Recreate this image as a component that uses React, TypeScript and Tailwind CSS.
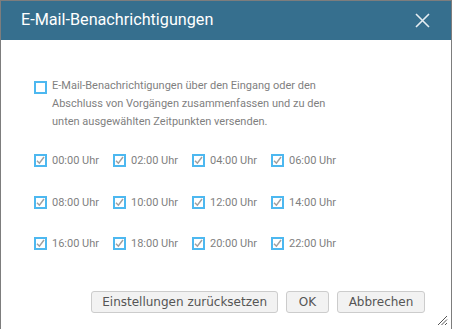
import React from 'react';

const times = [
  '00:00 Uhr', '02:00 Uhr', '04:00 Uhr', '06:00 Uhr',
  '08:00 Uhr', '10:00 Uhr', '12:00 Uhr', '14:00 Uhr',
  '16:00 Uhr', '18:00 Uhr', '20:00 Uhr', '22:00 Uhr',
];

const Box = ({ checked }: { checked: boolean }) => (
  <span className="w-[13px] h-[13px] border-2 border-[#4db8f0] bg-white flex items-center justify-center shrink-0">
    {checked && (
      <svg width="9" height="9" viewBox="0 0 9 9" fill="none">
        <path d="M1 4.8 L3.4 7.2 L8 1" stroke="#a0a0a0" strokeWidth="1.5" />
      </svg>
    )}
  </span>
);

export default function App() {
  return (
    <div className="w-[452px] h-[329px] bg-white border-x border-t border-[#7d7d7d] flex flex-col relative overflow-hidden" style={{ fontFamily: 'Roboto, sans-serif' }}>
      {/* Header */}
      <div className="h-[39px] bg-[#366f8e] flex items-center justify-between pl-[20px] pr-[21px] shrink-0">
        <h2 className="text-[16.2px] text-white leading-none">E-Mail-Benachrichtigungen</h2>
        <svg width="15" height="15" viewBox="0 0 15 15" fill="none">
          <path d="M1 1 L14 14 M14 1 L1 14" stroke="#e6edf2" strokeWidth="1.6" />
        </svg>
      </div>

      {/* Content */}
      <div className="pl-[33px] pt-[40px] text-[11px] text-[#7f7f7f]">
        <div className="flex items-start gap-[5px]">
          <span className="mt-[1px]"><Box checked={false} /></span>
          <p className="leading-[18px] -mt-[3px] w-[282px]">
            E-Mail-Benachrichtigungen über den Eingang oder den Abschluss von Vorgängen zusammenfassen und zu den unten ausgewählten Zeitpunkten versenden.
          </p>
        </div>

        <div className="grid grid-cols-[79px_79px_79px_79px] gap-y-[28.5px] mt-[23px]">
          {times.map((t) => (
            <div key={t} className="flex items-center gap-[5px] h-[13px]">
              <Box checked={true} />
              <span className="leading-none">{t}</span>
            </div>
          ))}
        </div>
      </div>

      {/* Footer */}
      <div className="mt-auto mb-[16px] flex justify-end gap-[8px] pr-[26px] text-[12px] text-[#555]" style={{ fontFamily: '"DejaVu Sans", sans-serif' }}>
        <button type="button" className="h-[22px] px-[10px] bg-[#f2f2f2] border border-[#cccccc] rounded-[3px]">Einstellungen zurücksetzen</button>
        <button type="button" className="h-[22px] w-[43px] bg-[#f2f2f2] border border-[#cccccc] rounded-[3px]">OK</button>
        <button type="button" className="h-[22px] w-[88px] bg-[#f2f2f2] border border-[#cccccc] rounded-[3px]">Abbrechen</button>
      </div>

      {/* Resize grip */}
      <svg className="absolute right-[3px] bottom-[3px]" width="12" height="12" viewBox="0 0 12 12">
        <path d="M11 2 L2 11 M11 5.5 L5.5 11 M11 9 L9 11" stroke="#555" strokeWidth="1" />
      </svg>
    </div>
  );
}
